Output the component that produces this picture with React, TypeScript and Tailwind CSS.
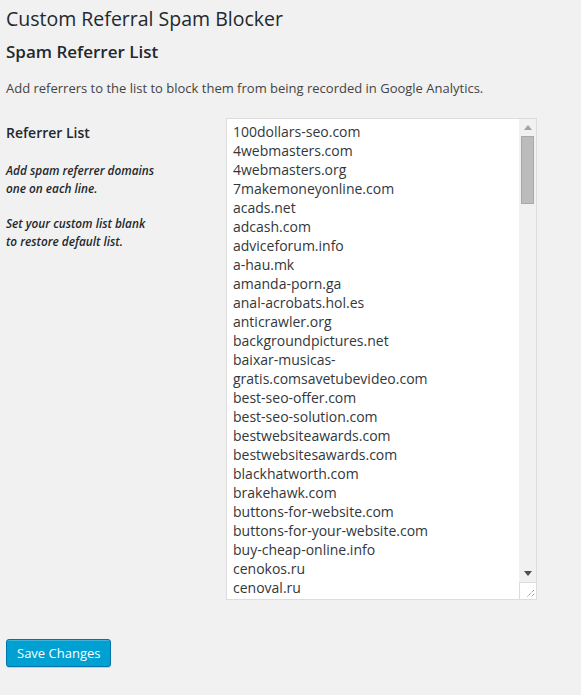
import React from "react";

const domains = [
  "100dollars-seo.com",
  "4webmasters.com",
  "4webmasters.org",
  "7makemoneyonline.com",
  "acads.net",
  "adcash.com",
  "adviceforum.info",
  "a-hau.mk",
  "amanda-porn.ga",
  "anal-acrobats.hol.es",
  "anticrawler.org",
  "backgroundpictures.net",
  "baixar-musicas-",
  "gratis.comsavetubevideo.com",
  "best-seo-offer.com",
  "best-seo-solution.com",
  "bestwebsiteawards.com",
  "bestwebsitesawards.com",
  "blackhatworth.com",
  "brakehawk.com",
  "buttons-for-website.com",
  "buttons-for-your-website.com",
  "buy-cheap-online.info",
  "cenokos.ru",
  "cenoval.ru",
];

export default function App() {
  return (
    <div
      className="min-h-[695px] w-[581px] bg-[#f1f1f1] pl-[6px] text-[#444]"
      style={{ fontFamily: '"Open Sans", "Noto Sans", sans-serif' }}
    >
      <h1 className="pt-[4px] text-[19.5px] leading-[29px] font-normal text-[#23282d]">
        Custom Referral Spam Blocker
      </h1>
      <h2 className="mt-[7px] text-[17px] leading-[24px] font-semibold text-[#23282d]">
        Spam Referrer List
      </h2>
      <p className="mt-[15px] text-[13px] leading-[18px] text-[#444]">
        Add referrers to the list to block them from being recorded in Google Analytics.
      </p>

      <div className="mt-[21px] flex">
        <div className="w-[220px] pt-[5px]">
          <div className="text-[14px] leading-[20px] font-semibold text-[#23282d]">
            Referrer List
          </div>
          <div className="mt-[18px] text-[11.8px] leading-[18px] font-semibold italic text-[#23282d]">
            <div>Add spam referrer domains</div>
            <div>one on each line.</div>
            <div className="mt-[17px]">Set your custom list blank</div>
            <div>to restore default list.</div>
          </div>
        </div>

        <div className="flex h-[482px] w-[311px] border border-[#dddddd] bg-white">
          <div className="flex-1 overflow-hidden px-[6px] pt-[3px] text-[14px] leading-[19px] text-[#32373c]">
            {domains.map((d) => (
              <div key={d} className="whitespace-nowrap">
                {d}
              </div>
            ))}
          </div>
          <div className="flex w-[17px] flex-col bg-[#f1f1f1]">
            <div className="flex h-[17px] items-center justify-center">
              <svg width="8" height="5" viewBox="0 0 8 5">
                <path d="M0 5 L4 0 L8 5 Z" fill="#a3a3a3" />
              </svg>
            </div>
            <div className="flex-1 px-[2px]">
              <div className="h-[68px] border border-[#a9a9a9] bg-[#bcbcbc]" />
            </div>
            <div className="flex h-[17px] items-center justify-center">
              <svg width="8" height="5" viewBox="0 0 8 5">
                <path d="M0 0 L8 0 L4 5 Z" fill="#505050" />
              </svg>
            </div>
            <div className="flex h-[17px] items-end justify-end border-t border-l border-[#dcdcdc] bg-white">
              <svg width="10" height="10" viewBox="0 0 10 10" className="mb-[1px] mr-[1px]">
                <path d="M9 2 L2 9 M9 6 L6 9" stroke="#6b6b6b" strokeWidth="1" strokeDasharray="1 1" />
              </svg>
            </div>
          </div>
        </div>
      </div>

      <div className="mt-[39px]">
        <button className="h-[28px] rounded-[3px] border border-[#0073aa] bg-[#00a0d2] px-[10px] text-[13px] leading-[26px] text-white shadow-[inset_0_1px_0_rgba(120,200,230,0.5),0_1px_0_rgba(0,0,0,0.15)]">
          Save Changes
        </button>
      </div>
    </div>
  );
}
